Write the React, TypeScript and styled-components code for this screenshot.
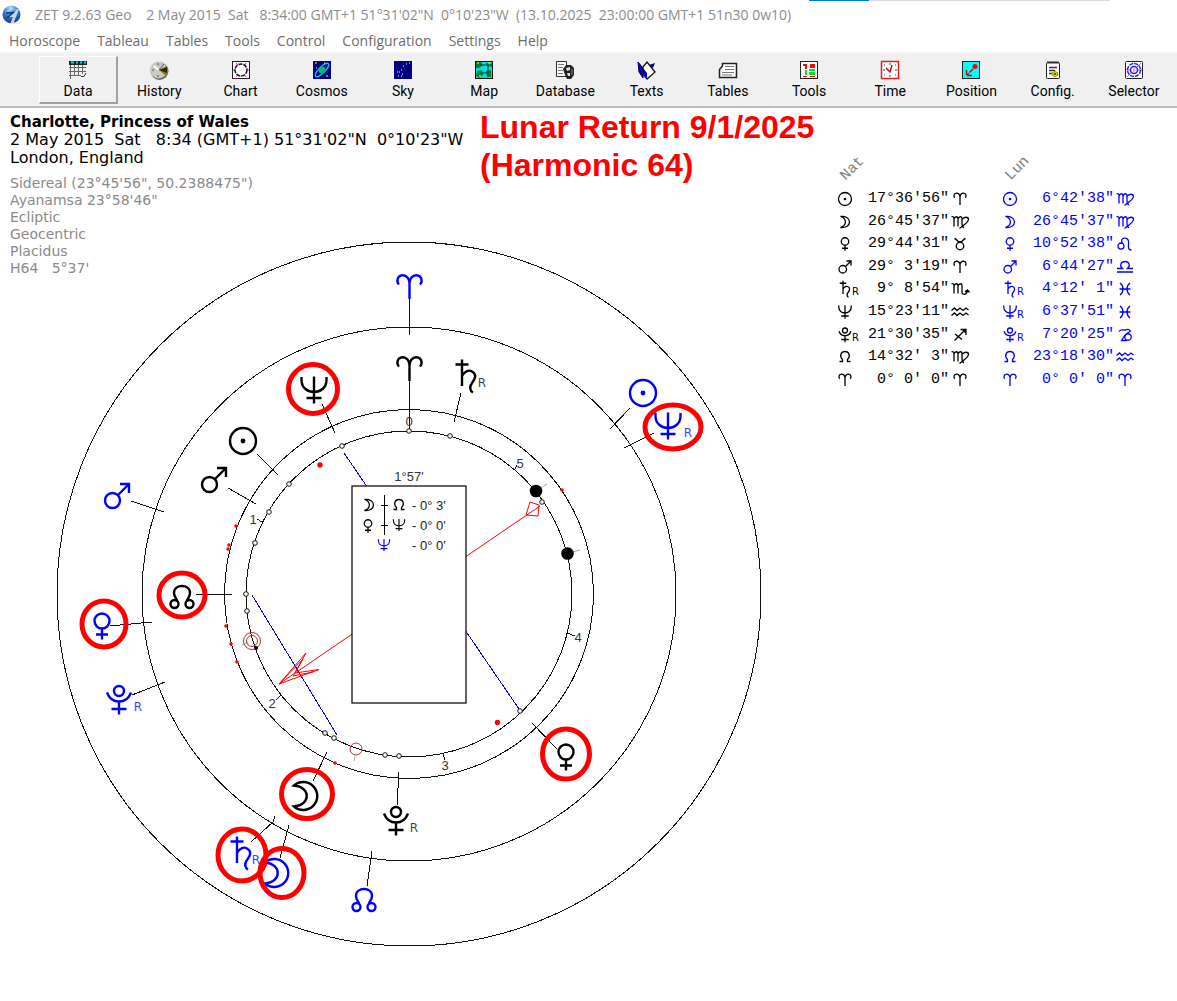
import React from "react";
import styled, { createGlobalStyle } from "styled-components";

const INK = "#000000";
const BLUE = "#0000ff";
const RED = "#ff0000";

const GlobalStyle = createGlobalStyle`
  * { box-sizing: border-box; }
  body { margin: 0; background: #ffffff; color: #000000; font-family: "Liberation Sans", Arial, sans-serif; }
`;

const Window = styled.div`
  min-height: 100vh;
  display: flex;
  flex-direction: column;
  background: #ffffff;
`;

const TitleBar = styled.header`
  position: relative;
  display: flex;
  align-items: center;
  gap: 13px;
  height: 29px;
  padding-left: 2px;
  white-space: pre;
  overflow: hidden;
  font-family: "Open Sans", "Noto Sans", sans-serif;
  font-size: 14px;
  color: #8c8c8c;
`;

const LoadStrip = styled.div`
  position: absolute;
  top: 0;
  right: 67px;
  width: 301px;
  height: 1px;
  background: #dcdcdc;
`;

const LoadDone = styled.div`
  width: 60px;
  height: 1px;
  background: #0078d7;
`;

const MenuBar = styled.nav`
  display: flex;
  align-items: center;
  gap: 17px;
  height: 23px;
  padding-left: 9px;
`;

const MenuItem = styled.button`
  border: 0;
  padding: 0;
  background: none;
  font-family: "Open Sans", "Noto Sans", sans-serif;
  font-size: 14px;
  line-height: 22px;
  color: #6d6d6d;
`;

const Toolbar = styled.div`
  display: grid;
  grid-template-columns: repeat(14, minmax(0, 1fr));
  height: 56px;
  padding: 2px 2px 2px 38px;
  background: #f0f0f0;
  border-top: 2px solid #f4f4f4;
  border-bottom: 2px solid #bdbdbd;
`;

const ToolButton = styled.button<{ $active?: boolean }>`
  display: flex;
  flex-direction: column;
  align-items: center;
  gap: 2px;
  margin: 0 1px;
  padding: 3px 0 0;
  background: none;
  border: 1px solid transparent;
  border-color: ${(p) => (p.$active ? "#ffffff #a0a0a0 #a0a0a0 #ffffff" : "transparent")};
  border-right-width: 2px;
  border-bottom-width: 2px;
  font-family: Roboto, "Liberation Sans", sans-serif;
  font-size: 14px;
  line-height: 18px;
  color: #000000;
`;

const Workspace = styled.main`
  display: flex;
  align-items: flex-start;
  flex: 1;
`;

const ChartPane = styled.section`
  display: grid;
  flex: 0 1 836px;
  min-width: 0;
  & > * { grid-area: 1 / 1; }
`;

const Heading = styled.div`
  display: grid;
  grid-template-columns: 470px 1fr;
  align-self: start;
  padding-left: 10px;
`;

const Subject = styled.div`
  padding-top: 5px;
  font-family: "DejaVu Sans", Verdana, sans-serif;
  white-space: pre;
`;

const SubjectLine = styled.div<{ $bold?: boolean }>`
  font-size: ${(p) => (p.$bold ? 15 : 16)}px;
  line-height: 18px;
  font-weight: ${(p) => (p.$bold ? 700 : 400)};
`;

const Settings = styled.div`
  margin-top: 8px;
  font-size: 14px;
  line-height: 17px;
  color: #8a8a8a;
`;

const ChartTitle = styled.h1`
  margin: 0;
  font-size: 32px;
  line-height: 38px;
  font-weight: 700;
  color: ${RED};
  white-space: pre-line;
`;

const Wheel = styled.svg`
  display: block;
  width: 100%;
  max-width: 720px;
  height: auto;
  margin: 128px 0 0 50px;
`;

const Positions = styled.section`
  display: flex;
  padding-top: 41px;
`;

const PositionTable = styled.table<{ $color: string }>`
  width: 165px;
  height: 242px;
  table-layout: fixed;
  border-collapse: collapse;
  color: ${(p) => p.$color};
  font-family: "Liberation Mono", "Courier New", monospace;
  font-size: 15px;
  line-height: 20px;
`;

const HeadCell = styled.th`
  height: 39px;
  padding: 0;
  font-weight: 400;
  color: #808080;
  text-align: left;
`;

const Slanted = styled.span`
  display: inline-block;
  width: 34px;
  text-align: center;
  transform: rotate(-45deg);
`;

const BodyCell = styled.td`
  padding: 0;
  white-space: pre;
`;

const BodyCellInner = styled.div`
  display: flex;
  align-items: center;
  height: 20px;
`;

const Retro = styled.span`
  align-self: flex-end;
  margin-left: -2px;
  font-family: "DejaVu Sans", Verdana, sans-serif;
  font-size: 10px;
  line-height: 14px;
`;

/* Astrological symbols, each drawn around the origin within roughly 28 by 28 units. */
const GLYPHS: Record<string, React.ReactNode> = {
  sun: (<><circle r="13" /><circle r="1.2" fill="currentColor" /></>),
  moon: <path d="M-12-10.5A14 14 0 1 1-12 10.5C5 9 5-9-12-10.5Z" />,
  venus: (<><circle cy="-5" r="7.5" /><path d="M0 2.5V13.5M-6 8.5H6" /></>),
  mars: (<><circle cx="-4.5" cy="4.5" r="7.5" /><path d="M1-1L12-12M3-12H12V-3" /></>),
  saturn: <path d="M-4-16.5V10M-10.5-11.5H2.5M-4 0C-1-5 3-6.5 6-4.5C11-2 9.5 3 6 7C3 11 4 15 7 16.5" />,
  neptune: <path d="M-12.5-13V-10C-12.5-2-6 2 0 2S12.5-2 12.5-10V-13M0-13.5V13.5M-7.5 8H7.5" />,
  pluto: (<><circle cy="-9" r="5" /><path d="M-12-7.5C-10-2-6 1.5 0 1.5S10-2 12-7.5M0 1.5V14.5M-7.5 9H7.5" /></>),
  node: (<><circle cx="-7.5" cy="7" r="4" /><circle cx="7.5" cy="7" r="4" /><path d="M-5 3.5C-6 1-8-1-8-4C-8-9-4-11 0-11S8-9 8-4C8-1 6 1 5 3.5" /></>),
  aries: <path d="M-10.5-2.5C-13-5-13-11-7-11.7C-3-12 0-8 0-4V12M10.5-2.5C13-5 13-11 7-11.7C3-12 0-8 0-4" />,
  taurus: (<><circle cy="4" r="7.5" /><path d="M-11-11C-6-10-6-4 0-4S6-10 11-11" /></>),
  virgo: <path d="M-17-10C-14-12-12-10-12-6V9M-12-6C-10-12-4-12-4-6V9M-4-6C-2-12 4-12 4-6V4C4 8 6 11 8 12M4-5C8-11 17-11 17-5C16 2 6 7-1 13" />,
  scorpio: <path d="M-17-10C-14-12-12-10-12-6V9M-12-6C-10-12-4-12-4-6V9M-4-6C-2-12 4-12 4-6V6C4 12 12 13 15 4M10 6L15 2L19 7" />,
  aquarius: <path d="M-17-3L-11-8L-6-3L0-8L6-3L12-8L17-4M-17 7L-11 2L-6 7L0 2L6 7L12 2L17 6" />,
  sagittarius: <path d="M-11 11L11-11M1-11H12V0M5-11L11-5M-10-2L4 9" />,
  leo: (<><circle cx="-8" cy="4" r="6" /><path d="M-5-1C-13-13 7-16 7-5V6C7 10 10 12 13 12" /></>),
  libra: <path d="M-16 3H-5C-12-3-8-11 0-11S12-3 5 3H16M-16 10H16" />,
  pisces: <path d="M-10-12C-2-6-2 6-10 12M10-12C2-6 2 6 10 12M-11 0H11" />,
  capricorn: (<><path d="M-12-7C-8-13-4-9 1-10C5-12 9-11 11-8C6-5-2 2-7 11H4" /><circle cx="6" cy="4" r="6.5" /></>),
};

/* Simpler outlines for the sizes where the full drawing would fill in. */
const SMALL_GLYPHS: Record<string, React.ReactNode> = {
  ...GLYPHS,
  moon: <path d="M-9-11C2-12 9-7 9 0S2 12-9 11C4 7 4-7-9-11Z" />,
  node: <path d="M-11 9H-5V5C-12-2-8-11 0-11S12-2 5 5V9H11" />,
};

function SmallGlyph({ name, wide }: { name: string; wide?: boolean }) {
  return (
    <svg width={wide ? 22 : 18} height="18" viewBox={wide ? "-22 -18 44 36" : "-18 -18 36 36"} fill="none" stroke="currentColor" strokeWidth="2.6" aria-label={name} role="img">
      {SMALL_GLYPHS[name]}
    </svg>
  );
}

function ChartGlyph({ name, x, y, color = INK, scale = 1, retro }: { name: string; x: number; y: number; color?: string; scale?: number; retro?: [number, number] }) {
  const small = scale < 1;
  return (
    <g color={color}>
      <g transform={`translate(${x} ${y}) scale(${scale})`} fill="none" stroke="currentColor" strokeWidth={small ? 2.6 : 2.4}>
        {small ? SMALL_GLYPHS[name] : GLYPHS[name]}
      </g>
      {retro && <text x={retro[0]} y={retro[1]} fontSize="12" fontFamily="DejaVu Sans, sans-serif" textAnchor="middle" fill={color} opacity="0.75">R</text>}
    </g>
  );
}

const frame = <rect x="1.5" y="1.5" width="17" height="17" fill="#fff" stroke="#222" />;

const ICONS: Record<string, React.ReactNode> = {
  Data: (
    <>
      <path d="M2.5 4V19M6.5 4V16M10.5 4V16M14.5 4V14M1 7.5H18M1 11.5H18M1 15.5H13" stroke="#666" fill="none" />
      <rect x="1" y="1" width="18" height="4" fill="#222" />
      <path d="M3 2.5H6M8 2.5H10M12 2.5H14M16 2.5H18" stroke="#00e0e0" strokeWidth="2" />
      <path d="M13 16.5H16L18 13" stroke="#333" fill="none" />
    </>
  ),
  History: (
    <>
      <circle cx="10.5" cy="11" r="9" fill="#6a6a6a" />
      <circle cx="9.5" cy="10" r="8.5" fill="#c9c9c4" />
      <path d="M10 10L18 6A9 9 0 0 1 17 16Z" fill="#8c7f10" />
      <path d="M10 10L18 7L18 13Z" fill="#2b2808" />
      <path d="M9.5 10L5 6" stroke="#fff" strokeWidth="2" />
      <path d="M9 3V5M3 10H5M9 15V17M10 10L15 4" stroke="#555" />
    </>
  ),
  Chart: (
    <>
      {frame}
      <path d="M2 10H18M5 3L15 17M15 3L5 17" stroke="#ff00ff" strokeDasharray="3 2" />
      <circle cx="10" cy="10" r="6" fill="#fff" stroke="#111" strokeWidth="1.5" strokeDasharray="4 1" />
      <path d="M7 7L13 13M13 7L7 13" stroke="#8ff" strokeDasharray="1 2" />
    </>
  ),
  Cosmos: (
    <>
      <rect x="1" y="1" width="18" height="18" fill="#000080" />
      <ellipse cx="10" cy="10" rx="9" ry="3" transform="rotate(-45 10 10)" fill="none" stroke="#00c8ff" strokeWidth="1.3" />
      <circle cx="10" cy="10" r="3.5" fill="#00c070" />
      <path d="M3 3H5M4 8H5M14 16H16M12 3H13" stroke="#ffff60" />
    </>
  ),
  Sky: (
    <>
      <rect x="1" y="1" width="18" height="18" fill="#000080" />
      <path d="M13 4H14M16 3H17M10 6H11M8 10H9M6 12H7M5 16H6M9 14H10" stroke="#fff" />
      <path d="M4 12H5M8 16H9" stroke="#ffff60" />
    </>
  ),
  Map: (
    <>
      <rect x="1.5" y="1.5" width="17" height="17" fill="#00e0e0" stroke="#111" />
      <path d="M2 2H7L9 5L5 8L2 8ZM12 3H18V7L13 6ZM3 11L8 10L9 15L5 18L2 16ZM12 11L17 10V17H13Z" fill="#008040" />
      <path d="M3 3H5M14 3H17M5 16H7" stroke="#ffff30" />
      <path d="M6 5H14V13H7" stroke="#003030" fill="none" />
    </>
  ),
  Database: (
    <>
      <path d="M1.5 1.5H11.5V16.5H1.5Z" fill="#fff" stroke="#333" />
      <path d="M3 4.5H9M3 7.5H8M3 10.5H8M3 13.5H8" stroke="#777" />
      <path d="M8 9L11 5H16L19 8V15L16 19H12L10 15Z" fill="#222" />
      <path d="M11 8L15 7V10L12 11ZM12 13H15V16H13Z" fill="#ddd" />
      <path d="M17 9V15" stroke="#888" />
    </>
  ),
  Texts: (
    <>
      <path d="M1 2L6 8V18L2 12Z" fill="#0000d0" stroke="#000060" />
      <path d="M6 7L10 2L18 12L10 19L6 14Z" fill="#fff" stroke="#111" strokeWidth="1.3" />
      <path d="M6 8V14L10 19V13Z" fill="#0000d0" />
      <path d="M12 5L18 3L16 8Z" fill="#000080" />
    </>
  ),
  Tables: (
    <>
      <path d="M4.5 6V3.5H18.5V17.5H1.5V9.5L4.5 6Z" fill="#fff" stroke="#222" strokeWidth="1.5" />
      <path d="M7 6.5H16M7 9.5H16M4 12.5H16M4 15H14" stroke="#777" />
    </>
  ),
  Tools: (
    <>
      {frame}
      <path d="M4 4H8V9H6V6H4ZM11 4H16V8H11Z" fill="#ff0000" />
      <path d="M6 10H8V15H6ZM10 9H16V11H10ZM10 12H16V15H10Z" fill="#00e030" />
      <path d="M4 16.5H8M11 16.5H16" stroke="#ff0000" />
    </>
  ),
  Time: (
    <>
      <rect x="1.5" y="1.5" width="17" height="17" fill="#fff" stroke="#e02020" strokeWidth="1.5" />
      <path d="M12 5L10 12L6 8" stroke="#c00000" fill="none" strokeWidth="1.3" />
      <path d="M10 3V5M10 15V17M3 10H5M15 10H17M4 5H5M15 5H16M4 15H5M15 15H16" stroke="#444" />
    </>
  ),
  Position: (
    <>
      <rect x="1.5" y="1.5" width="17" height="17" fill="#00ffff" stroke="#222" />
      <circle cx="14" cy="6.5" r="2.5" fill="#ff0000" />
      <path d="M12 9L6 15M5.5 10V15.5H11" stroke="#d00000" strokeWidth="1.4" strokeDasharray="5 1" fill="none" />
    </>
  ),
  Config: (
    <>
      <rect x="3.5" y="2.5" width="13" height="16" rx="1" fill="#fff" stroke="#222" />
      <path d="M5 1V4M7 1V4M9 1V4M11 1V4M13 1V4M15 1V4" stroke="#333" />
      <path d="M6 7.5H14M6 10.5H12M6 13.5H9" stroke="#333" strokeWidth="1.5" />
      <circle cx="12" cy="14" r="2.8" fill="#d8c800" stroke="#807800" strokeDasharray="2 1" />
      <circle cx="12" cy="14" r="1" fill="#333" />
    </>
  ),
  Selector: (
    <>
      <rect x="1.5" y="1.5" width="17" height="17" rx="1" fill="#fff" stroke="#222" />
      <path d="M2 10H18M3 17L17 3" stroke="#ff40ff" />
      <circle cx="10" cy="10" r="6.5" fill="none" stroke="#2020ff" strokeWidth="1.5" strokeDasharray="4 1" />
      <circle cx="10" cy="10" r="3.5" fill="#fff" stroke="#2020ff" strokeWidth="1.5" />
      <path d="M10 8V12" stroke="#ff40ff" />
    </>
  ),
};

const TOOLS: [string, string][] = [
  ["Data", "Data"], ["History", "History"], ["Chart", "Chart"], ["Cosmos", "Cosmos"], ["Sky", "Sky"], ["Map", "Map"],
  ["Database", "Database"], ["Texts", "Texts"], ["Tables", "Tables"], ["Tools", "Tools"], ["Time", "Time"],
  ["Position", "Position"], ["Config", "Config."], ["Selector", "Selector"],
];

const MENU = ["Horoscope", "Tableau", "Tables", "Tools", "Control", "Configuration", "Settings", "Help"];

type Row = [string, boolean, string, string];

const NATAL: Row[] = [
  ["sun", false, `17°36'56"`, "aries"],
  ["moon", false, `26°45'37"`, "virgo"],
  ["venus", false, `29°44'31"`, "taurus"],
  ["mars", false, `29° 3'19"`, "aries"],
  ["saturn", true, ` 9° 8'54"`, "scorpio"],
  ["neptune", false, `15°23'11"`, "aquarius"],
  ["pluto", true, `21°30'35"`, "sagittarius"],
  ["node", false, `14°32' 3"`, "virgo"],
  ["aries", false, ` 0° 0' 0"`, "aries"],
];

const LUNAR: Row[] = [
  ["sun", false, ` 6°42'38"`, "virgo"],
  ["moon", false, `26°45'37"`, "virgo"],
  ["venus", false, `10°52'38"`, "leo"],
  ["mars", false, ` 6°44'27"`, "libra"],
  ["saturn", true, ` 4°12' 1"`, "pisces"],
  ["neptune", true, ` 6°37'51"`, "pisces"],
  ["pluto", true, ` 7°20'25"`, "capricorn"],
  ["node", false, `23°18'30"`, "aquarius"],
  ["aries", false, ` 0° 0' 0"`, "aries"],
];

function Bodies({ title, rows, color }: { title: string; rows: Row[]; color: string }) {
  return (
    <PositionTable $color={color}>
      <colgroup>
        <col width={32} />
        <col width={81} />
        <col />
      </colgroup>
      <thead>
        <tr><HeadCell colSpan={3}><Slanted>{title}</Slanted></HeadCell></tr>
      </thead>
      <tbody>
        {rows.map(([body, retro, degrees, sign]) => (
          <tr key={body}>
            <BodyCell>
              <BodyCellInner><SmallGlyph name={body} />{retro && <Retro>R</Retro>}</BodyCellInner>
            </BodyCell>
            <BodyCell>{degrees}</BodyCell>
            <BodyCell><BodyCellInner><SmallGlyph name={sign} wide /></BodyCellInner></BodyCell>
          </tr>
        ))}
      </tbody>
    </PositionTable>
  );
}

const POINTERS = [
  "M409.5 299V335", "M409.5 381V431", "M322 404L335 433", "M461 393L454 422", "M257 454L278 475", "M228 488L256 504",
  "M196 594.5H232", "M313 781L327 752", "M397 805L399 772", "M557 749L532 723", "M630 408L610 429", "M654 433L624 448",
  "M131 501L164 512", "M110 626L152 622", "M132 695L165 682", "M251 842L273 822L275 816", "M280 858L289 825", "M367 886L372 851",
  "M257 519L262 522", "M276 700L281 695", "M443 754L445 760", "M567 633L575 636", "M515 469L517 465",
].join("");

const CUSPS = [
  [409, 431], [450, 436], [342, 446], [289, 484], [269, 512], [255, 543], [246, 594], [247, 611],
  [325, 733], [334, 738], [385, 755], [399, 756], [542, 502], [520, 711],
];

const SPOTS = [[236, 526], [229, 545], [228, 549], [226, 626], [231, 644], [237, 662], [335, 763], [562, 490]];

const MARKS = [
  [313, 389, 24.5, 24.5], [182, 595, 23, 22], [104, 624, 22, 23], [307, 794, 25.5, 24.5],
  [242, 855, 24, 26], [282, 873, 22, 24.5], [566, 754, 23.5, 25], [673, 427, 28, 22],
];

const NUMERALS: [string, number, number][] = [
  ["0", 409, 426], ["1", 253, 524], ["2", 272, 708], ["3", 445, 770], ["4", 578, 642], ["5", 520, 468],
];

function ChartWheel() {
  return (
    <Wheel viewBox="50 236 720 716" role="img" aria-label="Harmonic 64 chart wheel">
      <g fill="none" stroke="#111" shapeRendering="crispEdges">
        {[352, 267, 184.5, 163].map((r) => <circle key={r} cx="409" cy="594" r={r} />)}
        <path d={POINTERS} />
      </g>
      <path d="M541 488L547 484M573 552L580 550M355 756L354 761M242 645L248 642" stroke="#aaa" />
      <path d="M344 453L519 709M252 595L337 735" stroke={BLUE} fill="none" shapeRendering="crispEdges" />
      <path
        d="M279 684L540 506M530 502L539 505L538 516L526 515ZM279 684L306 653L295 673L319 669.5L279 684L303 659L293 676L313 672"
        stroke={RED}
        fill="none"
      />
      <g stroke="#111" fill="#fff">{CUSPS.map(([x, y]) => <circle key={`${x}-${y}`} cx={x} cy={y} r="2.3" />)}</g>
      <circle cx="536" cy="491" r="6.3" />
      <circle cx="567.5" cy="553.5" r="6.3" />
      <g fill="none" stroke="#b83232">
        <circle cx="252" cy="641" r="8.5" />
        <circle cx="252" cy="641" r="5.5" />
        <circle cx="356" cy="749" r="6" />
      </g>
      <circle cx="256" cy="648" r="2" />
      <g fill={RED}>
        <circle cx="320" cy="465" r="2.7" />
        <circle cx="497.5" cy="722.5" r="2.7" />
        {SPOTS.map(([x, y]) => <circle key={`${x}-${y}`} cx={x} cy={y} r="1.8" />)}
      </g>
      <g fontSize="13" fontFamily="Liberation Sans, sans-serif" fill="#333344" textAnchor="middle">
        {NUMERALS.map(([n, x, y]) => <text key={n} x={x} y={y}>{n}</text>)}
        <text x="409" y="481">1°57'</text>
      </g>

      <rect x="352" y="486" width="114" height="217" fill="#fff" stroke="#111" strokeWidth="1.3" />
      <g fontSize="13" fontFamily="Liberation Sans, sans-serif" fill="#222">
        <text x="412" y="510">- 0° 3'</text>
        <text x="412" y="530">- 0° 0'</text>
        <text x="412" y="550">- 0° 0'</text>
      </g>
      <path d="M384.5 495V535M381 505.5H388M381 525.5H388" stroke={INK} />
      <ChartGlyph name="moon" x={369} y={505} scale={0.5} />
      <ChartGlyph name="node" x={399} y={505} scale={0.5} />
      <ChartGlyph name="venus" x={368} y={526} scale={0.5} />
      <ChartGlyph name="neptune" x={399} y={525} scale={0.45} />
      <ChartGlyph name="neptune" x={384} y={545} scale={0.45} color={BLUE} />

      <ChartGlyph name="aries" x={409.5} y={369} />
      <ChartGlyph name="saturn" x={466} y={376} retro={[482, 387]} />
      <ChartGlyph name="neptune" x={314} y={390} />
      <ChartGlyph name="sun" x={243} y={441} />
      <ChartGlyph name="mars" x={214} y={480} />
      <ChartGlyph name="node" x={182} y={597} />
      <ChartGlyph name="moon" x={306} y={796} />
      <ChartGlyph name="pluto" x={396} y={821} retro={[414, 832]} />
      <ChartGlyph name="venus" x={566} y={757} />

      <ChartGlyph name="aries" x={409.5} y={287} color={BLUE} />
      <ChartGlyph name="sun" x={643} y={393} color={BLUE} />
      <ChartGlyph name="neptune" x={668} y={426} color={BLUE} retro={[688, 437]} />
      <ChartGlyph name="mars" x={117} y={496} color={BLUE} />
      <ChartGlyph name="venus" x={102} y={626} color={BLUE} />
      <ChartGlyph name="pluto" x={119} y={700} color={BLUE} retro={[138, 711]} />
      <ChartGlyph name="saturn" x={241} y={853} color={BLUE} retro={[256, 864]} />
      <ChartGlyph name="moon" x={277} y={873} color={BLUE} />
      <ChartGlyph name="node" x={364} y={900} color={BLUE} />

      <g fill="none" stroke={RED} strokeWidth="5">
        {MARKS.map(([x, y, rx, ry]) => <ellipse key={`${x}-${y}`} cx={x} cy={y} rx={rx} ry={ry} />)}
      </g>
    </Wheel>
  );
}

function Logo() {
  return (
    <svg width="20" height="20" viewBox="0 0 20 20" aria-hidden="true">
      <defs>
        <radialGradient id="orb" cx="0.45" cy="0.15" r="0.9">
          <stop offset="0" stopColor="#b9dcfa" />
          <stop offset="0.4" stopColor="#3f86d8" />
          <stop offset="1" stopColor="#0a2f7c" />
        </radialGradient>
      </defs>
      <circle cx="9.5" cy="9.5" r="9" fill="url(#orb)" />
      <path d="M3 7C6 4 10 7 15 4C13 8 10 9 7 12C9 12 10 12 11 12L8 19H18L19 15C17 18 13 18 12 17L17 4" fill="#dfe8f2" opacity="0.85" />
      <path d="M4 8C8 8 10 8 12 7L5 13" stroke="#12397f" strokeWidth="1.5" fill="none" />
    </svg>
  );
}

export default function App() {
  return (
    <Window>
      <GlobalStyle />
      <TitleBar>
        <Logo />
        <span>{`ZET 9.2.63 Geo    2 May 2015  Sat   8:34:00 GMT+1 51°31'02"N  0°10'23"W  (13.10.2025  23:00:00 GMT+1 51n30 0w10)`}</span>
        <LoadStrip><LoadDone /></LoadStrip>
      </TitleBar>
      <MenuBar>{MENU.map((m) => <MenuItem key={m}>{m}</MenuItem>)}</MenuBar>
      <Toolbar role="toolbar">
        {TOOLS.map(([icon, label]) => (
          <ToolButton key={icon} $active={icon === "Data"}>
            <svg width="20" height="20" viewBox="0 0 20 20" aria-hidden="true">{ICONS[icon]}</svg>
            {label}
          </ToolButton>
        ))}
      </Toolbar>
      <Workspace>
        <ChartPane>
          <Heading>
            <Subject>
              <SubjectLine $bold>Charlotte, Princess of Wales</SubjectLine>
              <SubjectLine>{`2 May 2015  Sat   8:34 (GMT+1) 51°31'02"N  0°10'23"W`}</SubjectLine>
              <SubjectLine>London, England</SubjectLine>
              <Settings>
                <div>{`Sidereal (23°45'56", 50.2388475")`}</div>
                <div>{`Ayanamsa 23°58'46"`}</div>
                <div>Ecliptic</div>
                <div>Geocentric</div>
                <div>Placidus</div>
                <div>{"H64   5°37'"}</div>
              </Settings>
            </Subject>
            <ChartTitle>{"Lunar Return 9/1/2025\n(Harmonic 64)"}</ChartTitle>
          </Heading>
          <ChartWheel />
        </ChartPane>
        <Positions>
          <Bodies title="Nat" rows={NATAL} color={INK} />
          <Bodies title="Lun" rows={LUNAR} color={BLUE} />
        </Positions>
      </Workspace>
    </Window>
  );
}
